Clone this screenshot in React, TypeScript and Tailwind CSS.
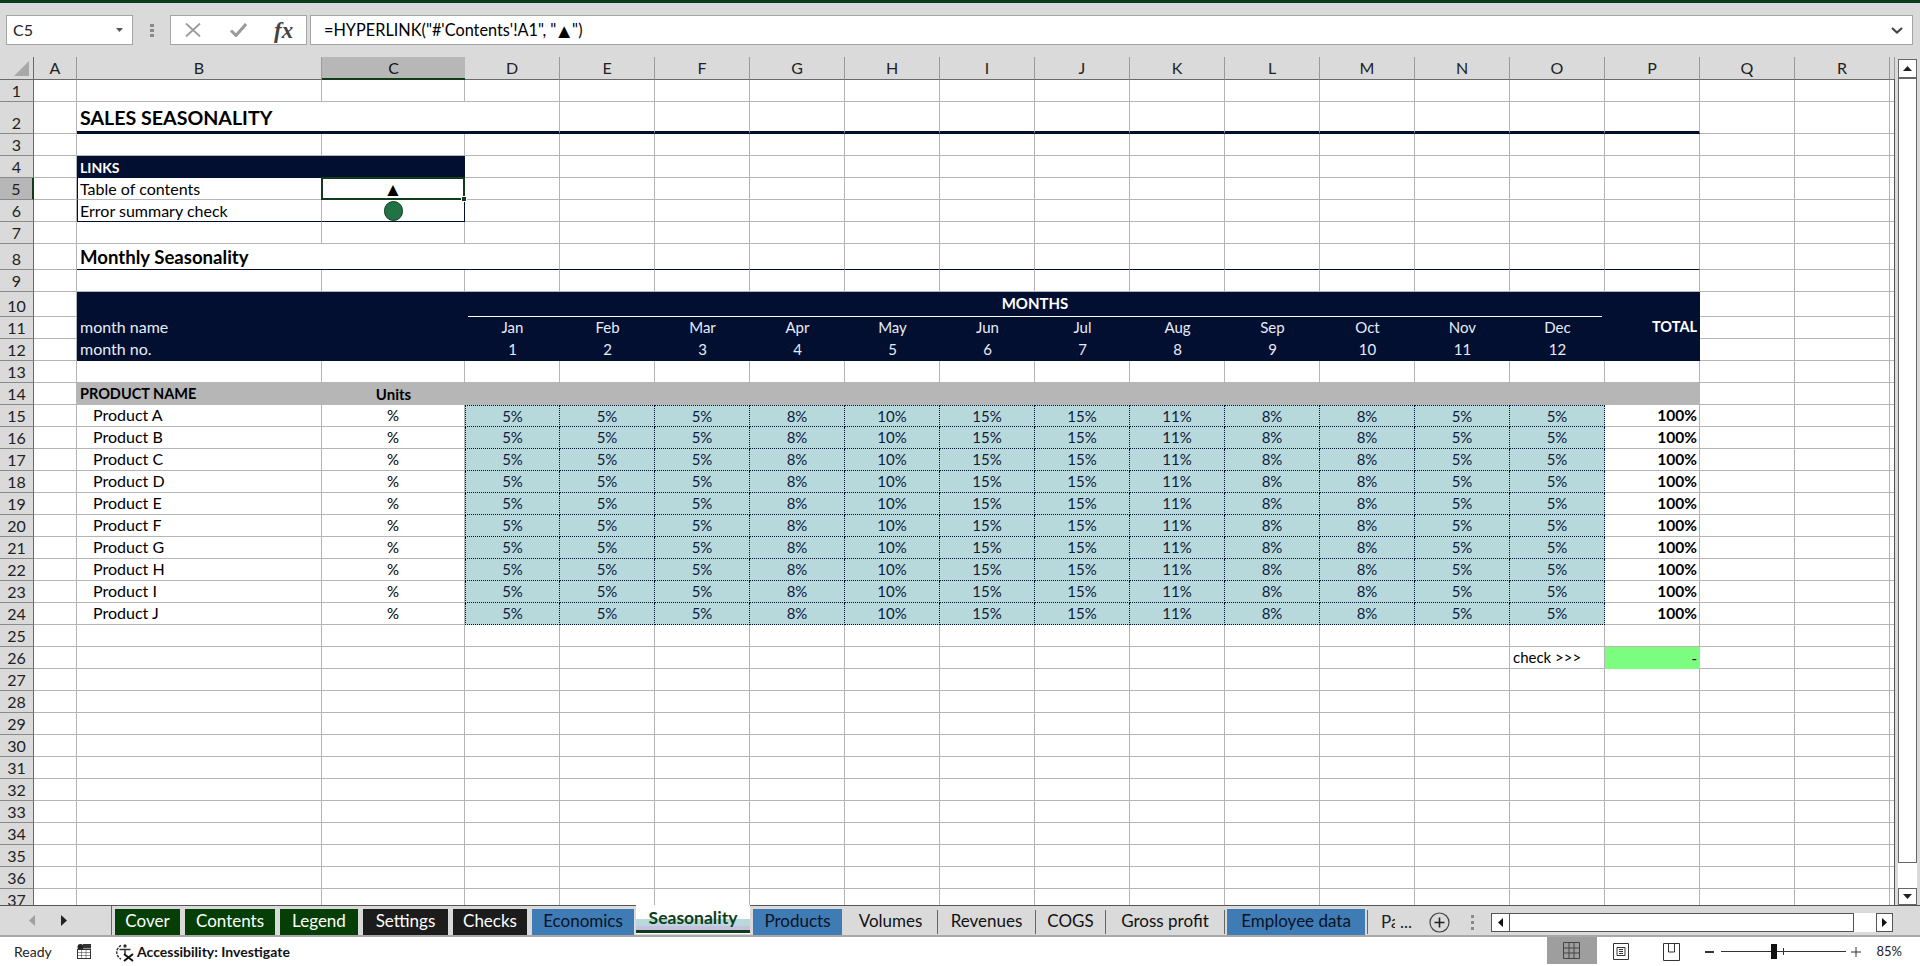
import type { ReactNode } from 'react';

const FONT = 'font-["Lato","Carlito","Noto_Sans",sans-serif]';
const NAVY = 'bg-[#030f30]';
const GRID = 'border-[#b5b5b5]';

const COLS = ['A', 'B', 'C', 'D', 'E', 'F', 'G', 'H', 'I', 'J', 'K', 'L', 'M', 'N', 'O', 'P', 'Q', 'R', ''];
const MONTHS = ['Jan', 'Feb', 'Mar', 'Apr', 'May', 'Jun', 'Jul', 'Aug', 'Sep', 'Oct', 'Nov', 'Dec'];
const SHARE = ['5%', '5%', '5%', '8%', '10%', '15%', '15%', '11%', '8%', '8%', '5%', '5%'];
const PRODUCTS = ['A', 'B', 'C', 'D', 'E', 'F', 'G', 'H', 'I', 'J'];

// plain gridline cell, used for all the empty ones
const Cell = ({ className = '', children }: { className?: string; children?: ReactNode }) => (
  <div className={`flex items-center overflow-visible whitespace-nowrap border-r border-b ${GRID} ${className}`}>
    {children}
  </div>
);

const Empties = ({ count, className = '' }: { count: number; className?: string }) => (
  <>
    {Array.from({ length: count }).map((_, i) => (
      <Cell key={i} className={className} />
    ))}
  </>
);

const RowHead = ({ n, active }: { n: number; active?: boolean }) => (
  <div
    className={`flex items-end justify-center border-b border-b-[#8a8a8a] border-r text-[16px] leading-[21px] text-[#222] ${
      active ? 'bg-[#b7b7b7] border-r-2 border-r-[#0f3d1a]' : 'bg-[#dadada] border-r-[#6a6a6a]'
    }`}
  >
    {n}
  </div>
);

const Tab = ({ label, color, width }: { label: string; color: string; width: string }) => (
  <div className={`flex h-[26px] shrink-0 items-center justify-center pb-[2px] text-[17px] ${color} ${width}`}>{label}</div>
);

const PlainTab = ({ label, width }: { label: string; width: string }) => (
  <div className={`flex h-[24px] shrink-0 items-center justify-center border-r border-[#666] pb-[2px] text-[17px] text-[#111] ${width}`}>
    {label}
  </div>
);

const Sheet = () => (
  <div className={`relative grid h-[848px] w-[1895px] shrink-0 grid-cols-[34px_43px_245px_143px_repeat(15,95px)_5px] grid-rows-[23px_22px_32px_repeat(5,22px)_26px_22px_25px_repeat(27,22px)] overflow-hidden bg-white text-[16px] text-black`}>
    {/* column headers */}
    <div className="flex items-end justify-end border-r border-b border-[#6a6a6a] bg-[#dadada] pr-[4px] pb-[3px]">
      <svg width="15" height="15" viewBox="0 0 15 15">
        <path d="M15 0V15H0Z" fill="#a8a8a8" />
      </svg>
    </div>
    {COLS.map((c, i) => (
      <div
        key={i}
        className={`flex items-center justify-center border-b text-[16px] ${
          c === 'C'
            ? 'border-b-2 border-b-[#0f3d1a] bg-[#b7b7b7] text-[#111]'
            : 'border-r border-r-[#9a9a9a] border-b-[#6a6a6a] bg-[#dadada] text-[#222]'
        }`}
      >
        {c}
      </div>
    ))}

    {/* 1 */}
    <RowHead n={1} />
    <Empties count={19} />

    {/* 2 */}
    <RowHead n={2} />
    <Cell />
    <Cell className="col-span-2 border-r-0 border-b-[3px] border-b-[#030f30] pt-[3px] pl-[3px] text-[19.6px] font-bold">SALES SEASONALITY</Cell>
    {Array.from({ length: 13 }).map((_, i) => (
      <Cell key={i} className="border-b-[3px] border-b-[#030f30]" />
    ))}
    <Empties count={3} />

    {/* 3 */}
    <RowHead n={3} />
    <Empties count={19} />

    {/* 4 */}
    <RowHead n={4} />
    <Cell />
    <div className={`col-span-2 flex items-center pl-[3px] text-[14px] font-bold text-white ${NAVY}`}>LINKS</div>
    <Empties count={16} />

    {/* 5 */}
    <RowHead n={5} active />
    <Cell />
    <Cell className="border-l border-l-[#030f30] pl-[2px]">Table of contents</Cell>
    <Cell className="relative justify-center">
      <span className="text-[19px] leading-none">▲</span>
      <div className="absolute -top-px -right-px -bottom-px -left-px border-2 border-[#0f3d1a]" />
      <div className="absolute -right-[3px] -bottom-[3px] h-[6px] w-[6px] border border-white bg-[#0f3d1a]" />
    </Cell>
    <Empties count={16} />

    {/* 6 */}
    <RowHead n={6} />
    <Cell />
    <Cell className="border-b-[#030f30] border-l border-l-[#030f30] pl-[2px]">Error summary check</Cell>
    <Cell className="justify-center border-r-[#030f30] border-b-[#030f30]">
      <div className="h-[20px] w-[19px] rounded-full border border-[#0f3d1a] bg-[#217346]" />
    </Cell>
    <Empties count={16} />

    {/* 7 */}
    <RowHead n={7} />
    <Empties count={19} />

    {/* 8 */}
    <RowHead n={8} />
    <Cell />
    <Cell className="col-span-2 border-r-0 border-b-[#030f30] pt-[2px] pl-[3px] text-[18.6px] font-bold">Monthly Seasonality</Cell>
    {Array.from({ length: 13 }).map((_, i) => (
      <Cell key={i} className="border-b-[#030f30]" />
    ))}
    <Empties count={3} />

    {/* 9 */}
    <RowHead n={9} />
    <Empties count={19} />

    {/* 10 */}
    <RowHead n={10} />
    <Cell />
    <div className={`col-span-2 ${NAVY}`} />
    <div className={`col-span-12 px-[3px] ${NAVY}`}>
      <div className="flex h-full items-center justify-center border-b border-white pb-[2px] text-[15px] font-bold text-white">MONTHS</div>
    </div>
    <div className={`row-span-3 flex items-center justify-end pr-[3px] text-[14.5px] font-bold text-white ${NAVY}`}>TOTAL</div>
    <Empties count={3} />

    {/* 11 */}
    <RowHead n={11} />
    <Cell />
    <div className={`col-span-2 flex items-center pb-[2px] pl-[3px] text-[#e6ecf8] ${NAVY}`}>month name</div>
    {MONTHS.map((m) => (
      <div key={m} className={`flex items-center justify-center pb-[2px] text-[15px] text-[#e6ecf8] ${NAVY}`}>{m}</div>
    ))}
    <Empties count={3} />

    {/* 12 */}
    <RowHead n={12} />
    <Cell />
    <div className={`col-span-2 flex items-center pb-[2px] pl-[3px] text-[#e6ecf8] ${NAVY}`}>month no.</div>
    {MONTHS.map((m, i) => (
      <div key={m} className={`flex items-center justify-center pb-[2px] text-[15px] text-[#e6ecf8] ${NAVY}`}>{i + 1}</div>
    ))}
    <Empties count={3} />

    {/* 13 */}
    <RowHead n={13} />
    <Empties count={19} />

    {/* 14 */}
    <RowHead n={14} />
    <Cell />
    <div className="flex items-center bg-[#b6b6b6] pl-[3px] text-[14.5px] font-bold">PRODUCT NAME</div>
    <div className="flex items-center justify-center bg-[#b6b6b6] text-[15px] font-bold">Units</div>
    <div className="col-span-13 bg-[#b6b6b6]" />
    <Empties count={3} />

    {/* 15-24 */}
    {PRODUCTS.map((p, r) => (
      <div key={p} className="contents">
        <RowHead n={15 + r} />
        <Cell />
        <Cell className="pb-[2px] pl-[16px]">Product {p}</Cell>
        <Cell className="justify-center text-[15px]">%</Cell>
        {SHARE.map((v, i) => (
          <div
            key={i}
            className={`flex items-center justify-center border-r border-b border-dotted border-[#030f30] bg-[#b8d9db] text-[15px] text-[#0d1a40] ${
              i === 0 ? 'border-l' : ''
            } ${r === 0 ? 'border-t' : ''}`}
          >
            {v}
          </div>
        ))}
        <Cell className="justify-end pr-[2px] text-[15.5px] font-bold">100%</Cell>
        <Empties count={3} />
      </div>
    ))}

    {/* 25 */}
    <RowHead n={25} />
    <Empties count={19} />

    {/* 26 */}
    <RowHead n={26} />
    <Empties count={14} />
    <Cell className="pl-[3px] text-[15px]">{'check >>>'}</Cell>
    <div className="flex items-center justify-end bg-[#7dfd7f] pr-[3px] text-[15px]">-</div>
    <Empties count={3} />

    {/* 27-37 */}
    {Array.from({ length: 11 }).map((_, r) => (
      <div key={r} className="contents">
        <RowHead n={27 + r} />
        <Empties count={19} />
      </div>
    ))}

    {/* right edge of the sheet */}
    <div className="absolute top-[22px] right-0 bottom-0 w-px bg-[#555]" />
  </div>
);

export default function App() {
  return (
    <div className={`flex h-[966px] w-[1920px] flex-col overflow-hidden bg-[#dadada] ${FONT}`}>
      <div className="h-[3px] shrink-0 bg-[#0b3d1b]" />

      {/* formula bar */}
      <div className="flex h-[54px] shrink-0 items-start pt-[12px]">
        <div className="ml-[6px] flex h-[30px] w-[127px] items-center justify-between border border-[#a5a5a5] bg-white pr-[9px] pl-[6px] text-[16px] text-[#222]">
          C5
          <svg width="7" height="4" viewBox="0 0 7 4"><path d="M0 0H7L3.5 4Z" fill="#555" /></svg>
        </div>
        <div className="ml-[16px] flex h-[30px] w-[5px] flex-col items-center justify-center gap-[2px]">
          <div className="h-[3px] w-[4px] bg-[#8a8a8a]" />
          <div className="h-[3px] w-[4px] bg-[#8a8a8a]" />
          <div className="h-[3px] w-[4px] bg-[#8a8a8a]" />
        </div>
        <div className="ml-[16px] flex h-[30px] w-[137px] items-center border border-[#a5a5a5] bg-white">
          <svg className="ml-[14px]" width="16" height="14" viewBox="0 0 16 14">
            <path d="M1 .5 15 13.5M15 .5 1 13.5" stroke="#9a9a9a" strokeWidth="1.8" fill="none" />
          </svg>
          <svg className="ml-[29px]" width="17" height="14" viewBox="0 0 17 14">
            <path d="M1 7.5 6 12.5 16 1" stroke="#9a9a9a" strokeWidth="3" fill="none" />
          </svg>
          <span className="ml-[27px] font-['Liberation_Serif',serif] text-[23px] font-bold italic leading-none text-[#444]">fx</span>
        </div>
        <div className="ml-[3px] flex h-[30px] w-[1603px] items-center justify-between border border-[#a5a5a5] bg-white pr-[9px] pl-[13px] text-[16.3px] text-black">
          <span className="flex items-center">
            {'=HYPERLINK("#\'Contents\'!A1", "'}
            <span className="-mx-[2px] text-[20px] leading-none">▲</span>
            {'")'}
          </span>
          <svg width="12" height="7" viewBox="0 0 12 7"><path d="M1 1 6 5.5 11 1" stroke="#444" strokeWidth="2.2" fill="none" /></svg>
        </div>
      </div>

      {/* sheet and vertical scrollbar */}
      <div className="flex h-[848px] shrink-0">
        <Sheet />
        <div className="flex w-[25px] flex-col pt-[2px] pl-[3px]">
          <div className="flex h-[19px] w-[19px] shrink-0 items-center justify-center border border-[#666] bg-white">
            <svg width="9" height="5" viewBox="0 0 9 5"><path d="M4.5 0 9 5H0Z" fill="#222" /></svg>
          </div>
          <div className="h-[785px] w-[19px] shrink-0 border border-[#666] bg-white" />
          <div className="h-[25px] w-[19px] shrink-0 bg-white" />
          <div className="flex h-[17px] w-[19px] shrink-0 items-center justify-center border border-[#666] bg-white">
            <svg width="9" height="5" viewBox="0 0 9 5"><path d="M0 0H9L4.5 5Z" fill="#222" /></svg>
          </div>
        </div>
      </div>

      {/* sheet tabs */}
      <div className="flex h-[32px] shrink-0 items-start border-t border-b-2 border-t-[#555] border-b-[#a8a8a8]">
        <div className="flex h-[29px] w-[112px] shrink-0 items-center border-r border-r-[#666]">
          <svg className="ml-[29px]" width="6" height="11" viewBox="0 0 6 11"><path d="M6 0V11L0 5.5Z" fill="#a0a0a0" /></svg>
          <svg className="ml-[26px]" width="6" height="11" viewBox="0 0 6 11"><path d="M0 0V11L6 5.5Z" fill="#222" /></svg>
        </div>
        <div className="flex h-[29px] items-center gap-[5px] pl-[3px] pt-[3px] text-white">
          <Tab label="Cover" color="bg-[#053f06]" width="w-[65px]" />
          <Tab label="Contents" color="bg-[#053f06]" width="w-[90px]" />
          <Tab label="Legend" color="bg-[#053f06]" width="w-[78px]" />
          <Tab label="Settings" color="bg-[#1c1c1c]" width="w-[85px]" />
          <Tab label="Checks" color="bg-[#1c1c1c]" width="w-[74px]" />
          <Tab label="Economics" color="bg-[#3f7cb6] text-[#0a1224]" width="w-[102px]" />
        </div>
        <div className="-mt-px ml-[2px] flex h-[29px] w-[114px] shrink-0 flex-col bg-white">
          <div className="relative h-full">
            <div className="absolute inset-x-0 top-[14px] h-[7px] bg-[#b8d9db]" />
            <div className="absolute inset-x-0 top-[21px] h-[4px] bg-[#c9bfe0]" />
            <div className="absolute inset-x-0 top-[25px] h-[3px] bg-[#0f3d1a]" />
            <div className="relative flex h-[25px] items-center justify-center pt-[2px] text-[17.5px] font-bold text-[#0f3d1a]">Seasonality</div>
          </div>
        </div>
        <div className="flex h-[29px] items-center pt-[3px] pl-[3px]">
          <Tab label="Products" color="bg-[#3f7cb6] text-[#0a1224]" width="w-[89px]" />
          <PlainTab label="Volumes" width="w-[94px] ml-[2px]" />
          <PlainTab label="Revenues" width="w-[98px]" />
          <PlainTab label="COGS" width="w-[70px]" />
          <PlainTab label="Gross profit" width="w-[119px]" />
          <Tab label="Employee data" color="bg-[#3f7cb6] text-[#0a1224]" width="w-[138px] ml-[2px]" />
          <div className="ml-[2px] h-[24px] border-r border-[#666]" />
          <span className="ml-[13px] w-[14px] overflow-hidden text-[17px] text-[#222]">Pa</span>
          <span className="ml-[5px] w-[14px] text-[17px] text-[#222]">...</span>
          <svg className="ml-[15px]" width="21" height="21" viewBox="0 0 21 21">
            <circle cx="10.5" cy="10.5" r="9.5" fill="none" stroke="#444" strokeWidth="1.2" />
            <path d="M10.5 5.5V15.5M5.5 10.5H15.5" stroke="#222" strokeWidth="1.6" />
          </svg>
          <div className="ml-[21px] flex w-[4px] flex-col gap-[3px]">
            <div className="h-[3px] w-[3px] bg-[#8a8a8a]" />
            <div className="h-[3px] w-[3px] bg-[#8a8a8a]" />
            <div className="h-[3px] w-[3px] bg-[#8a8a8a]" />
          </div>
          <div className="ml-[16px] flex h-[19px] w-[402px] shrink-0 items-stretch">
            <div className="flex w-[19px] items-center justify-center border border-[#555] bg-white">
              <svg width="5" height="9" viewBox="0 0 5 9"><path d="M5 0V9L0 4.5Z" fill="#111" /></svg>
            </div>
            <div className="w-[344px] border-y border-r border-[#555] bg-white" />
            <div className="w-[22px] bg-white" />
            <div className="flex w-[17px] items-center justify-center border border-[#555] bg-white">
              <svg width="5" height="9" viewBox="0 0 5 9"><path d="M0 0V9L5 4.5Z" fill="#111" /></svg>
            </div>
          </div>
        </div>
      </div>

      {/* status bar */}
      <div className="relative flex flex-1 items-center bg-white text-[14px] text-[#222]">
        <span className="ml-[14px] w-[63px]">Ready</span>
        <svg width="14" height="15" viewBox="0 0 14 15">
          <circle cx="3.5" cy="3" r="3" fill="#222" />
          <rect x="6" y="0" width="8" height="4.5" fill="#333" />
          <rect x=".5" y="5.5" width="13" height="9" fill="none" stroke="#333" />
          <path d="M.5 8.5H13.5M.5 11.5H13.5M4.5 5.5V14.5M9 5.5V14.5" stroke="#333" strokeDasharray="1 1" />
        </svg>
        <svg className="ml-[24px]" width="20" height="20" viewBox="0 0 20 20">
          <path d="M6 3.5A7.5 7.5 0 0 0 6 17" stroke="#333" strokeWidth="1.5" fill="none" strokeDasharray="2.5 1.2" />
          <circle cx="10" cy="4" r="1.7" fill="#333" />
          <path d="M4.5 7.5H15.5M10 7V12" stroke="#333" strokeWidth="1.5" />
          <path d="M9 12 18 19M18 12 9 19" stroke="#111" strokeWidth="2" />
        </svg>
        <span className="ml-[2px] font-bold text-[#111]">Accessibility: Investigate</span>
        <div className="ml-auto flex h-full items-center">
          <div className="flex h-[27px] w-[50px] items-center justify-center self-start bg-[#9e9e9e]">
            <svg width="17" height="17" viewBox="0 0 17 17">
              <path d="M.5.5H16.5V16.5H.5ZM.5 6H16.5M.5 11H16.5M6 .5V16.5M11 .5V16.5" stroke="#444" fill="none" />
            </svg>
          </div>
          <svg className="ml-[16px]" width="16" height="17" viewBox="0 0 16 17">
            <path d="M.5.5H15.5V16.5H.5ZM4 4.5H12V12.5H4ZM6 6.5H10M6 8.5H10M6 10.5H10" stroke="#333" fill="none" />
          </svg>
          <svg className="ml-[34px]" width="17" height="18" viewBox="0 0 17 18">
            <path d="M.5.5H16.5V17.5H.5ZM5.5.5V9H11.5V.5" stroke="#333" fill="none" />
          </svg>
          <div className="ml-[25px] h-[2px] w-[9px] bg-[#333]" />
          <div className="relative ml-[7px] h-px w-[125px] bg-[#333]">
            <div className="absolute top-[-7px] left-[50px] h-[15px] w-[6px] bg-[#111]" />
            <div className="absolute top-[-3px] left-[62px] h-[7px] w-px bg-[#333]" />
          </div>
          <svg className="ml-[5px]" width="10" height="10" viewBox="0 0 10 10"><path d="M5 0V10M0 5H10" stroke="#333" /></svg>
          <span className="mr-[18px] ml-[16px] text-[13px]">85%</span>
        </div>
      </div>
    </div>
  );
}
